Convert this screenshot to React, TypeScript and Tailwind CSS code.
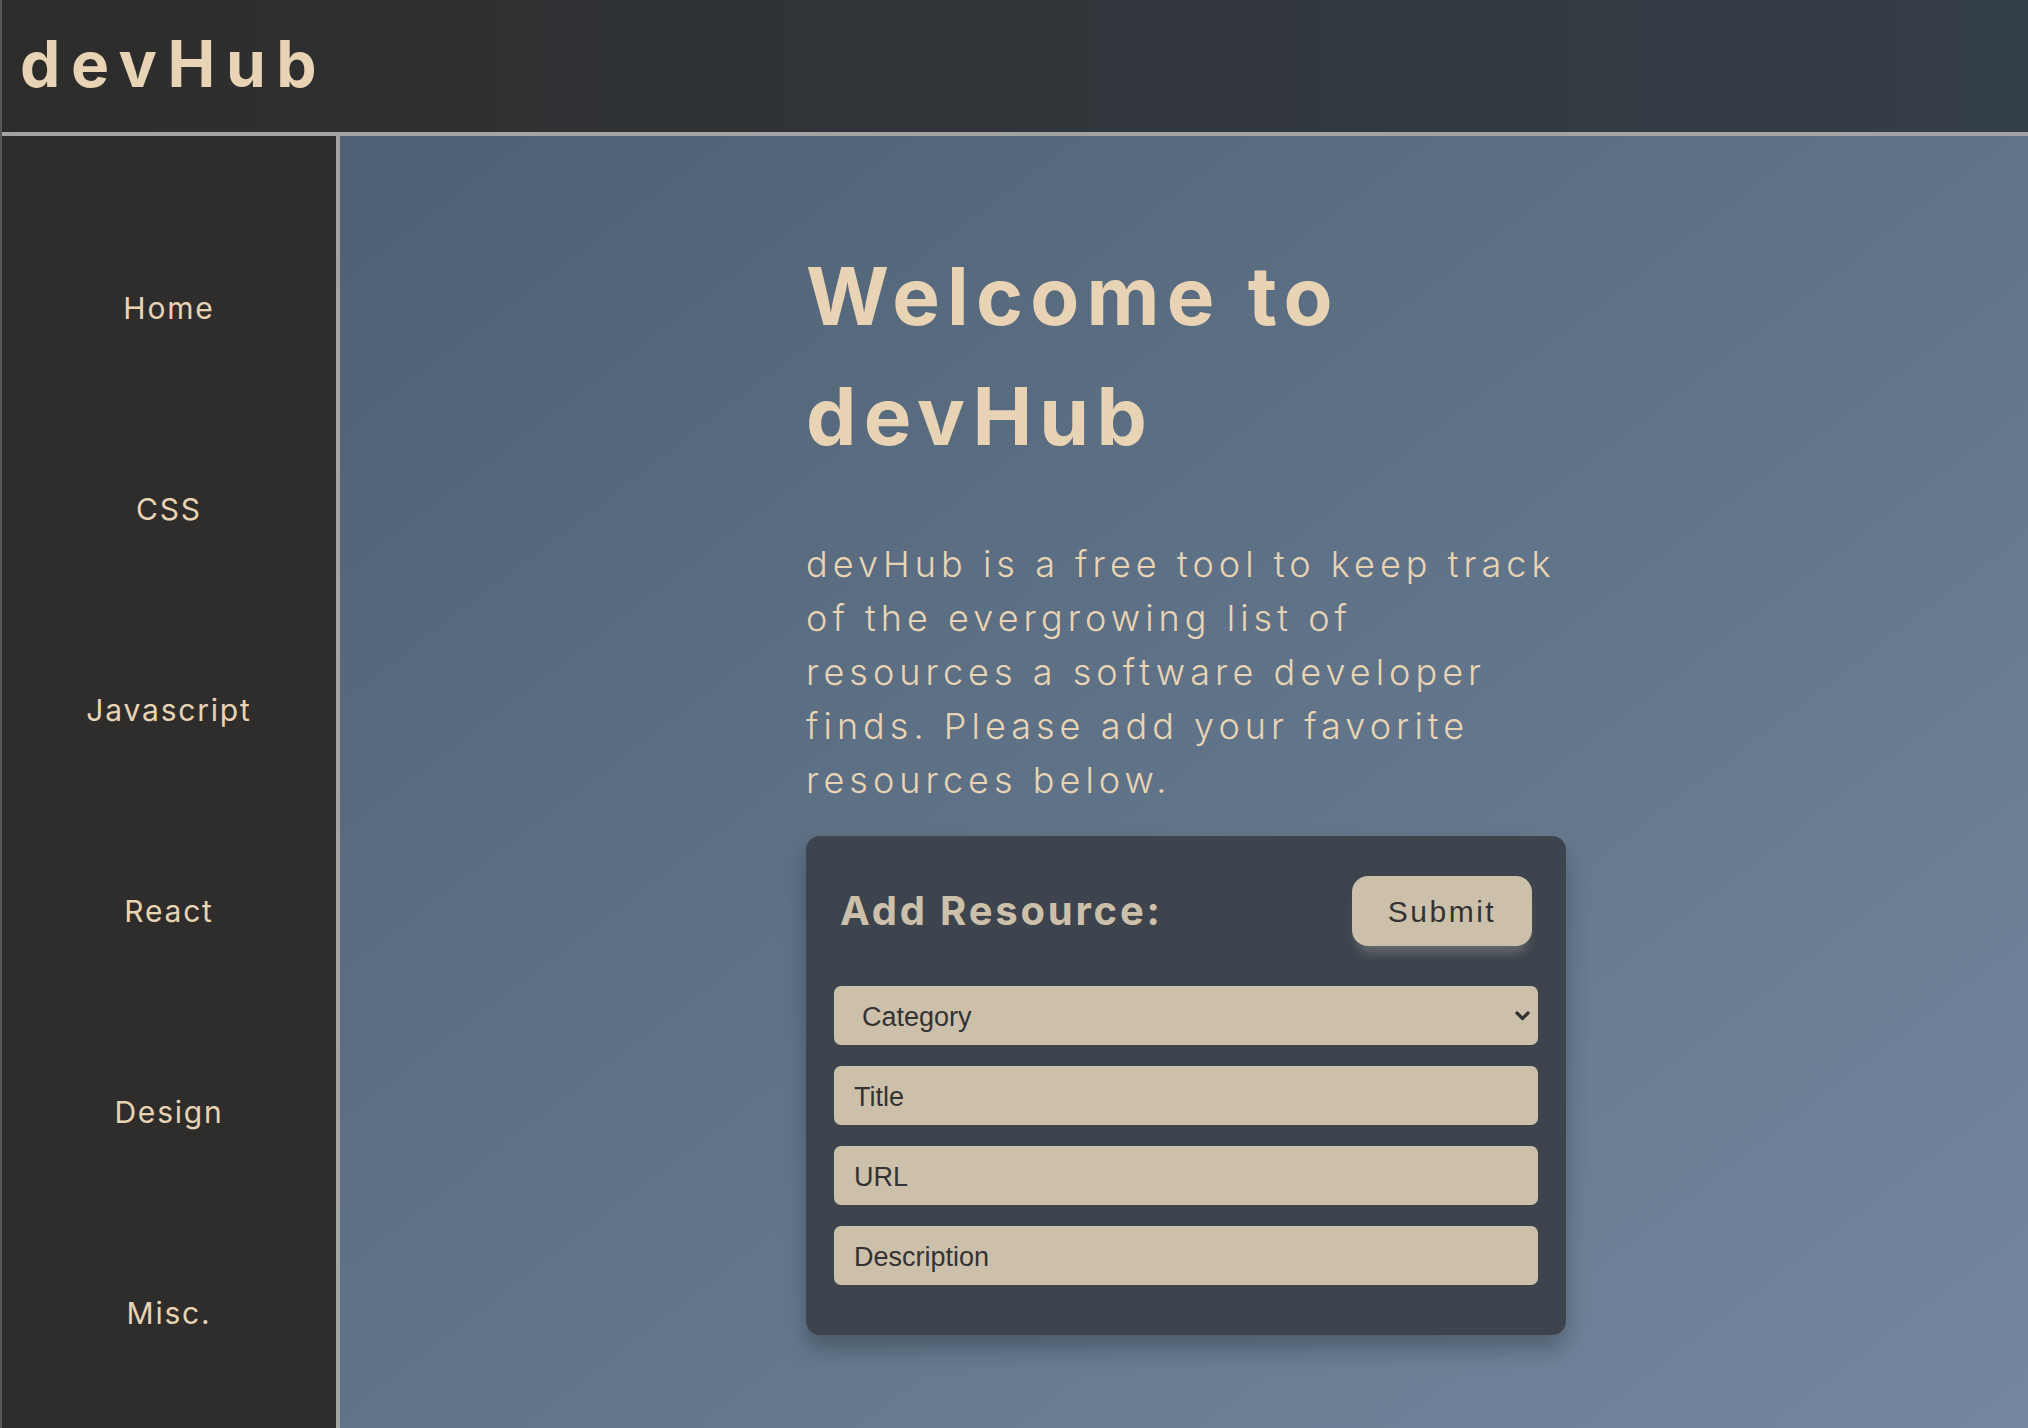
import React from "react";

const navItems = ["Home", "CSS", "Javascript", "React", "Design", "Misc."];

function Chevron() {
  return (
    <svg width="15" height="10" viewBox="0 0 15 10" className="pointer-events-none absolute right-[8px] top-1/2 -translate-y-1/2">
      <path d="M2 2 L7.5 7.5 L13 2" fill="none" stroke="#333" strokeWidth="3.2" strokeLinecap="round" strokeLinejoin="round" />
    </svg>
  );
}

export default function App() {
  const inputCls =
    "h-[59px] w-full rounded-[7px] bg-[#cdc0ab] pl-[20px] pt-[4px] text-[27px] text-[#333] placeholder:text-[#333] outline-none font-[family-name:'Liberation_Sans',Arial,sans-serif]";
  return (
    <div className="flex h-screen w-full flex-col overflow-hidden border-l-2 border-[#575757] font-[family-name:Inter,sans-serif]">
      <header className="flex h-[136px] shrink-0 items-center border-b-4 border-[#a3a3a3] bg-linear-to-r from-[#2d2c2b] to-[#343e49] pl-[18px] pb-[4px]">
        <h1 className="text-[64px] font-bold tracking-[0.165em] text-[#e8d4b4]">devHub</h1>
      </header>
      <div className="flex min-h-0 flex-1">
        <nav className="w-[338px] shrink-0 border-r-4 border-[#a3a3a3] bg-[#2e2d2b] pt-[72px]">
          {navItems.map((item) => (
            <div key={item} className="flex h-[201px] items-center justify-center text-[30px] tracking-[0.06em] text-[#e8d4b4]">
              {item}
            </div>
          ))}
        </nav>
        <main className="flex-1 bg-linear-to-br from-[#4e6073] to-[#73889f]">
          <div className="ml-[466px] w-[760px] pt-[100px]">
            <h2 className="text-[80px] font-bold leading-[120px] tracking-[0.09em] text-[#e8d4b4]">
              Welcome to
              <br />
              devHub
            </h2>
            <p className="mt-[61px] whitespace-nowrap text-[36px] font-light leading-[54px] tracking-[0.14em] text-[#e8d4b4]">
              devHub is a free tool to keep track
              <br />
              of the evergrowing list of
              <br />
              resources a software developer
              <br />
              finds. Please add your favorite
              <br />
              resources below.
            </p>
            <form className="mt-[29px] rounded-[14px] bg-[#3d444d] px-[28px] pt-[40px] pb-[50px] shadow-[0_14px_22px_rgba(0,0,0,0.25)]">
              <div className="flex h-[70px] items-center justify-between px-[6px]">
                <h3 className="text-[40px] font-bold tracking-[0.07em] text-[#cdc0aa]">Add Resource:</h3>
                <button
                  type="button"
                  className="h-[70px] w-[180px] rounded-[16px] bg-[#cdc0aa] text-[30px] tracking-[2.5px] text-[#333] shadow-[0_12px_12px_-6px_rgba(140,140,140,0.6)] font-[family-name:'Liberation_Sans',Arial,sans-serif]"
                >
                  Submit
                </button>
              </div>
              <div className="mt-[40px] flex flex-col gap-[21px]">
                <div className="relative">
                  <select
                    defaultValue=""
                    className="h-[59px] w-full appearance-none rounded-[7px] bg-[#cdc0ab] pl-[28px] pt-[3px] text-[27px] text-[#333] outline-none font-[family-name:'Liberation_Sans',Arial,sans-serif]"
                  >
                    <option value="">Category</option>
                    <option>CSS</option>
                    <option>Javascript</option>
                    <option>React</option>
                    <option>Design</option>
                    <option>Misc.</option>
                  </select>
                  <Chevron />
                </div>
                <input className={inputCls} placeholder="Title" />
                <input className={inputCls} placeholder="URL" />
                <input className={inputCls} placeholder="Description" />
              </div>
            </form>
          </div>
        </main>
      </div>
    </div>
  );
}
